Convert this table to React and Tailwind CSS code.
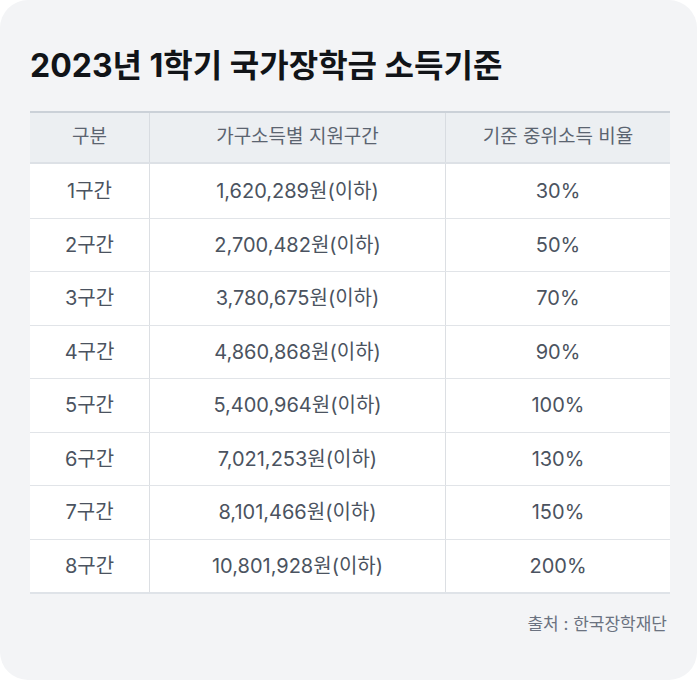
export default function App() {
  const rows = [
    ["1구간", "1,620,289원(이하)", "30%"],
    ["2구간", "2,700,482원(이하)", "50%"],
    ["3구간", "3,780,675원(이하)", "70%"],
    ["4구간", "4,860,868원(이하)", "90%"],
    ["5구간", "5,400,964원(이하)", "100%"],
    ["6구간", "7,021,253원(이하)", "130%"],
    ["7구간", "8,101,466원(이하)", "150%"],
    ["8구간", "10,801,928원(이하)", "200%"],
  ];
  return (
    <div className="w-[700px] h-[682px] bg-white" style={{ fontFamily: "Inter, 'Noto Sans CJK KR', sans-serif" }}>
      <div className="w-[697px] h-[680px] bg-[#f3f4f6] rounded-[28px] px-[30px] pt-[44px] flex flex-col">
        <h1 className="text-[32px] leading-[44px] font-bold text-[#111418]">2023년 1학기 국가장학금 소득기준</h1>
        <div className="mt-[23px] w-[640px] border-t-2 border-[#cbd1d8] border-b-2 border-b-[#dfe3e8]">
          <div className="grid grid-cols-[119px_296px_225px] h-[51px] bg-[#eceff2] text-[19px] text-[#5b6470] border-b-2 border-[#dde1e6]">
            <div className="flex items-center justify-center">구분</div>
            <div className="flex items-center justify-center border-l border-[#d8dce1]">가구소득별 지원구간</div>
            <div className="flex items-center justify-center border-l border-[#d8dce1]">기준 중위소득 비율</div>
          </div>
          {rows.map((r, i) => (
            <div key={i} className={`grid grid-cols-[119px_296px_225px] h-[53.5px] bg-white text-[20px] text-[#4b5360] ${i > 0 ? "border-t border-[#e1e4e8]" : ""}`}>
              <div className="flex items-center justify-center">{r[0]}</div>
              <div className="flex items-center justify-center border-l border-[#dcdfe3]">{r[1]}</div>
              <div className="flex items-center justify-center border-l border-[#dcdfe3]">{r[2]}</div>
            </div>
          ))}
        </div>
        <div className="mt-[18px] text-right text-[17px] text-[#6b7280]">출처 : 한국장학재단</div>
      </div>
    </div>
  );
}
